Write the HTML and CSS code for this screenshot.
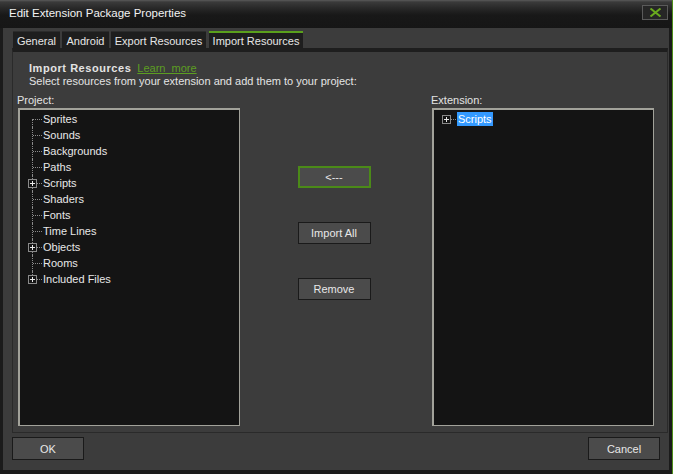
FILE: index.html
```html
<!DOCTYPE html>
<html>
<head>
<meta charset="utf-8">
<link rel="stylesheet" href="styles.css">
</head>
<body>
<div class="window">
  <div class="titlebar">
    <span class="title">Edit Extension Package Properties</span>
    <button class="close" aria-label="Close">
      <svg width="13" height="9" viewBox="0 0 13 9"><path d="M1.5 0.5 L11.5 8.5 M11.5 0.5 L1.5 8.5" stroke="#6aaa1e" stroke-width="2" fill="none"/></svg>
    </button>
  </div>
  <div class="client">
    <div class="tabs">
      <div class="tab t-general">General</div>
      <div class="tab t-android">Android</div>
      <div class="tab t-export">Export Resources</div>
      <div class="tab t-import active">Import Resources</div>
    </div>
    <div class="panel">
      <div class="intro">
        <div class="intro-head"><b>Import Resources</b><a class="link">Learn&nbsp; more</a></div>
        <div>Select resources from your extension and add them to your project:</div>
      </div>
      <div class="columns">
        <div class="col">
          <div class="label">Project:</div>
          <div class="listbox">
            <div class="tree">
              <div class="row"><span class="gut"></span>Sprites</div>
              <div class="row"><span class="gut"></span>Sounds</div>
              <div class="row"><span class="gut"></span>Backgrounds</div>
              <div class="row"><span class="gut"></span>Paths</div>
              <div class="row"><span class="gut"><svg class="plus" width="9" height="9" viewBox="0 0 9 9"><rect x="0.5" y="0.5" width="8" height="8" fill="#141414" stroke="#8a8a8a"/><path d="M2 4.5 H7 M4.5 2 V7" stroke="#e8e8e8"/></svg></span>Scripts</div>
              <div class="row"><span class="gut"></span>Shaders</div>
              <div class="row"><span class="gut"></span>Fonts</div>
              <div class="row"><span class="gut"></span>Time Lines</div>
              <div class="row"><span class="gut"><svg class="plus" width="9" height="9" viewBox="0 0 9 9"><rect x="0.5" y="0.5" width="8" height="8" fill="#141414" stroke="#8a8a8a"/><path d="M2 4.5 H7 M4.5 2 V7" stroke="#e8e8e8"/></svg></span>Objects</div>
              <div class="row"><span class="gut"></span>Rooms</div>
              <div class="row last"><span class="gut"><svg class="plus" width="9" height="9" viewBox="0 0 9 9"><rect x="0.5" y="0.5" width="8" height="8" fill="#141414" stroke="#8a8a8a"/><path d="M2 4.5 H7 M4.5 2 V7" stroke="#e8e8e8"/></svg></span>Included Files</div>
            </div>
          </div>
        </div>
        <div class="mid">
          <button class="btn default">&lt;---</button>
          <button class="btn">Import All</button>
          <button class="btn">Remove</button>
        </div>
        <div class="col">
          <div class="label">Extension:</div>
          <div class="listbox">
            <div class="tree">
              <div class="row single"><span class="gut"><svg class="plus" width="9" height="9" viewBox="0 0 9 9"><rect x="0.5" y="0.5" width="8" height="8" fill="#141414" stroke="#8a8a8a"/><path d="M2 4.5 H7 M4.5 2 V7" stroke="#e8e8e8"/></svg></span><span class="sel">Scripts</span></div>
            </div>
          </div>
        </div>
      </div>
    </div>
    <div class="footer">
      <button class="btn wide">OK</button>
      <button class="btn wide">Cancel</button>
    </div>
  </div>
</div>
</body>
</html>
```

FILE: styles.css
```css
html, body {
  margin: 0;
  padding: 0;
  background: #1b1b1b;
}
body {
  font-family: "Liberation Sans", Arial, sans-serif;
  font-size: 11px;
  color: #e4e4e4;
}
.window {
  width: 672px;
  height: 474px;
  background: #1b1b1b;
  border-right: 1px solid #4d8d1a;
  display: flex;
  flex-direction: column;
}
.titlebar {
  height: 28px;
  flex: none;
  background: linear-gradient(to bottom, #5a5a5a 0px, #3a3a3a 2px, #262626 9px, #181818 15px, #161616 28px);
  display: flex;
  align-items: flex-start;
  justify-content: space-between;
  padding: 0 4px 0 9px;
}
.title {
  font-size: 11.5px;
  color: #f2f2f2;
  margin-top: 7px;
}
.close {
  margin-top: 5px;
  width: 26px;
  height: 15px;
  padding: 0;
  border: 1px solid #5a5a5a;
  background: #262626;
  display: flex;
  align-items: center;
  justify-content: center;
}
.client {
  flex: 1;
  margin: 0 3px 4px 3px;
  background: #3c3c3c;
  display: flex;
  flex-direction: column;
  padding: 3px 0 0 9px;
}
.tabs {
  display: flex;
  gap: 2px;
  height: 17px;
  padding-left: 1px;
}
.tab {
  background: #1e1e1e;
  color: #e6e6e6;
  text-align: center;
  line-height: 18px;
  border-top: 1px solid #2c2c2c;
  height: 16px;
  white-space: nowrap;
}
.t-general { width: 47px; }
.t-android { width: 47px; }
.t-export { width: 95px; }
.t-import { width: 94px; margin-left: 1px; }
.tab.active {
  border-top: 2px solid #5aa01c;
  height: 15px;
  line-height: 16px;
}
.panel {
  height: 385px;
  width: 656px;
  box-sizing: border-box;
  border: 1px solid #2a2a2a;
  border-top: 4px solid #1e1e1e;
  background: #3c3c3c;
  padding: 10px 13px 0 4px;
  display: flex;
  flex-direction: column;
}
.intro {
  padding-left: 12px;
  line-height: 13px;
}
.intro-head b {
  font-weight: bold;
  letter-spacing: 0.55px;
}
.link {
  color: #5c9e22;
  text-decoration: underline;
  margin-left: 6px;
}
.columns {
  margin-top: 6px;
  display: flex;
  justify-content: space-between;
}
.col {
  width: 223px;
  display: flex;
  flex-direction: column;
}
.label {
  line-height: 13px;
  height: 13px;
  margin-bottom: 1px;
}
.listbox {
  margin-left: 1px;
  height: 318px;
  box-sizing: border-box;
  border: 2px solid #a2a29a;
  border-right-width: 1px;
  border-bottom-width: 1px;
  background: #141414;
  padding: 1px 0 0 7px;
}
.tree {
  display: flex;
  flex-direction: column;
}
.row {
  height: 16px;
  line-height: 16px;
  display: flex;
  align-items: center;
  position: relative;
  color: #e8e8e8;
}
.gut {
  width: 16px;
  height: 16px;
  flex: none;
  position: relative;
}
.gut::before {
  content: "";
  position: absolute;
  left: 5px;
  top: 0;
  height: 16px;
  border-left: 1px dotted #8a8a8a;
}
.row:first-child .gut::before {
  top: 8px;
  height: 8px;
}
.row.last .gut::before {
  height: 8px;
}
.row.single .gut::before {
  display: none;
}
.gut::after {
  content: "";
  position: absolute;
  left: 6px;
  top: 8px;
  width: 9px;
  border-top: 1px dotted #8a8a8a;
}
.plus {
  position: absolute;
  left: 1px;
  top: 4px;
  z-index: 1;
}
.sel {
  background: #3399ff;
  color: #ffffff;
  padding: 0 1px;
  line-height: 14px;
  height: 14px;
}
.mid {
  display: flex;
  flex-direction: column;
  align-items: center;
  gap: 34px;
  padding-top: 72px;
  padding-right: 3px;
}
.btn {
  width: 73px;
  height: 22px;
  box-sizing: border-box;
  background: #4b4b4b;
  border: 1px solid #1a1a1a;
  color: #e8e8e8;
  font-family: "Liberation Sans", Arial, sans-serif;
  font-size: 11px;
  padding: 0;
}
.btn.default {
  border: 2px solid #4b8a18;
}
.footer {
  display: flex;
  justify-content: space-between;
  padding: 4px 9px 0 0;
}
.btn.wide {
  width: 72px;
  height: 23px;
}
```
